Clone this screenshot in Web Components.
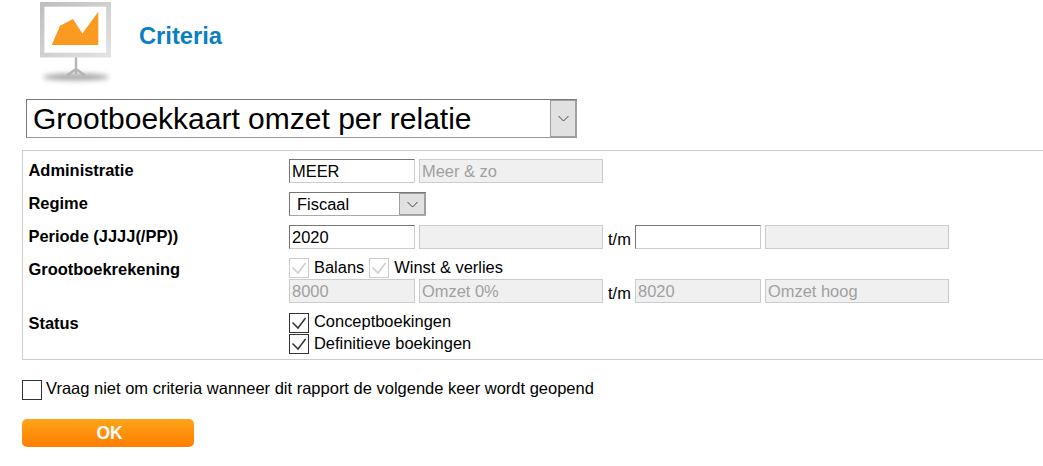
<!DOCTYPE html>
<html>
<head>
<meta charset="utf-8">
<title>Criteria</title>
<style>
  html, body { margin: 0; padding: 0; background: #fff; overflow: hidden; }
  body { font-family: "Liberation Sans", Arial, sans-serif; font-size: 16.45px; color: #000; }
  .line { display: flex; align-items: flex-start; gap: 4px; }
  .line.tight { gap: 5px; height: 21px; }
</style>
</head>
<body>
<criteria-page>
  <criteria-header>Criteria</criteria-header>
  <report-select>Grootboekkaart omzet per relatie</report-select>
  <criteria-panel>
    <span slot="l1">Administratie</span>
    <div slot="f1" class="line">
      <text-box>MEER</text-box><text-box wide disabled>Meer &amp; zo</text-box>
    </div>
    <span slot="l2">Regime</span>
    <div slot="f2" class="line"><small-select>Fiscaal</small-select></div>
    <span slot="l3">Periode (JJJJ(/PP))</span>
    <div slot="f3" class="line">
      <text-box>2020</text-box><text-box wide disabled></text-box><range-sep></range-sep><text-box></text-box><text-box wide disabled></text-box>
    </div>
    <span slot="l4">Grootboekrekening</span>
    <div slot="f4">
      <div class="line tight"><check-box checked disabled>Balans</check-box><check-box checked disabled>Winst &amp; verlies</check-box></div>
      <div class="line">
        <text-box disabled>8000</text-box><text-box wide disabled>Omzet 0%</text-box><range-sep></range-sep><text-box disabled>8020</text-box><text-box wide disabled>Omzet hoog</text-box>
      </div>
    </div>
    <span slot="l5">Status</span>
    <div slot="f5">
      <check-box checked block class="first">Conceptboekingen</check-box>
      <check-box checked block>Definitieve boekingen</check-box>
    </div>
  </criteria-panel>
  <check-box class="ask">Vraag niet om criteria wanneer dit rapport de volgende keer wordt geopend</check-box>
  <ok-button>OK</ok-button>
</criteria-page>

<script>
class CriteriaPage extends HTMLElement {
  constructor() {
    super();
    this.attachShadow({mode: "open"}).innerHTML = `
      <style>
        :host { display: block; width: 1043px; }
        .wrap { display: flex; flex-direction: column; align-items: flex-start; }
        ::slotted(check-box.ask) { margin: 20px 0 19px 22px; --box-gap: 4px; --txt-lh: 16px; font-size: 16.5px; }
      </style>
      <div class="wrap"><slot></slot></div>`;
  }
}

class CriteriaHeader extends HTMLElement {
  constructor() {
    super();
    this.attachShadow({mode: "open"}).innerHTML = `
      <style>
        :host { display: flex; align-items: center; height: 90px; margin-bottom: 9px; }
        svg { display: block; margin-left: 34px; width: 90px; height: 90px; flex: none; }
        h1 { margin: 0 0 18px 15px; font-size: 23.7px; font-weight: bold; color: #0a80c4; }
      </style>
      <svg viewBox="0 0 90 90">
        <defs>
          <filter id="blur" x="-30%" y="-100%" width="160%" height="300%"><feGaussianBlur stdDeviation="2.6"/></filter>
          <linearGradient id="frame" x1="0" y1="0" x2="1" y2="1">
            <stop offset="0" stop-color="#bdbdbd"/><stop offset="1" stop-color="#e4e4e4"/>
          </linearGradient>
        </defs>
        <ellipse cx="42" cy="77" rx="33" ry="3.6" fill="#a8a8a8" filter="url(#blur)"/>
        <rect x="6" y="2" width="71" height="55.5" fill="url(#frame)"/>
        <rect x="10.400" y="6.700" width="61.700" height="46" fill="#fff"/>
        <path d="M17.700 45 L26 25.700 L39 19 L48.400 33.500 L64.300 11.700 V45 Z" fill="#fb9a20"/>
        <path d="M42 57.500 V74 M42 69 L33 75.500 M42 69 L51 75.500" stroke="#b4b4b4" stroke-width="2.400" fill="none"/>
      </svg>
      <h1><slot></slot></h1>`;
  }
}

class ReportSelect extends HTMLElement {
  constructor() {
    super();
    this.attachShadow({mode: "open"}).innerHTML = `
      <style>
        :host { display: flex; box-sizing: border-box; width: 551px; height: 39px; margin: 0 0 12px 26px;
                border: 1px solid #7a7a7a; border-right: 0; border-bottom-color: #999; }
        .txt { flex: 1; padding-left: 6px; font-size: 30px; line-height: 37px; white-space: nowrap; }
        .btn { display: flex; align-items: center; justify-content: center; box-sizing: border-box; width: 27px;
               background: #e1e1e1; border: 2px solid #a0a0a0; border-width: 1px 2px 1px 1px; }
        svg { width: 11px; height: 7px; }
      </style>
      <div class="txt"><slot></slot></div>
      <div class="btn"><svg viewBox="0 0 11 7"><path d="M.5 1 L5.500 6 L10.500 1" fill="none" stroke="#444" stroke-width="1"/></svg></div>`;
  }
}

class SmallSelect extends HTMLElement {
  constructor() {
    super();
    this.attachShadow({mode: "open"}).innerHTML = `
      <style>
        :host { display: flex; box-sizing: border-box; width: 137px; height: 24px;
                border: 1px solid #767676; border-right: 0; border-bottom-color: #aaa; }
        .txt { flex: 1; padding-left: 7px; line-height: 22px; }
        .btn { display: flex; align-items: center; justify-content: center; box-sizing: border-box; width: 27px;
               background: #e1e1e1; border: 1px solid #a0a0a0; border-right-width: 2px; }
        svg { width: 11px; height: 7px; }
      </style>
      <div class="txt"><slot></slot></div>
      <div class="btn"><svg viewBox="0 0 11 7"><path d="M.5 1 L5.500 6 L10.500 1" fill="none" stroke="#444" stroke-width="1"/></svg></div>`;
  }
}

class CriteriaPanel extends HTMLElement {
  constructor() {
    super();
    let rows = "";
    for (let i = 1; i <= 5; i++) {
      rows += `<div class="lbl"><slot name="l${i}"></slot></div><div class="fld f${i}"><slot name="f${i}"></slot></div>`;
    }
    this.attachShadow({mode: "open"}).innerHTML = `
      <style>
        :host { display: block; box-sizing: border-box; margin-left: 22px; width: 1021px; height: 210px;
                border: 1px solid #ccc; border-right: 0; padding: 8px 0 5px 5.5px; }
        .grid { display: grid; grid-template-columns: 260.500px 1fr; row-gap: 9px; }
        .lbl { font-weight: bold; line-height: 22px; font-size: 16.45px; }
        .f5 { margin-top: 1px; }
      </style>
      <div class="grid">${rows}</div>`;
  }
}

class TextBox extends HTMLElement {
  constructor() {
    super();
    this.attachShadow({mode: "open"}).innerHTML = `
      <style>
        :host { display: block; box-sizing: border-box; flex: none; width: 126px; height: 24px; padding: 0 2px;
                background: #fff; border: 1px solid #ccc; border-top-color: #767676; border-left-color: #767676;
                line-height: 23px; white-space: nowrap; overflow: hidden; }
        :host([wide]) { width: 184px; }
        :host([disabled]) { background: #f0f0f0; border-color: #ccc; color: #a0a0a0; }
      </style>
      <slot></slot>`;
  }
}

class RangeSep extends HTMLElement {
  constructor() {
    super();
    this.attachShadow({mode: "open"}).innerHTML = `
      <style>
        :host { display: block; box-sizing: border-box; flex: none; width: 24px; padding: 5px 0 0 1px; line-height: 19px; height: 24px; }
      </style>t/m`;
  }
}

class CheckBox extends HTMLElement {
  constructor() {
    super();
    const on = this.hasAttribute("checked");
    this.attachShadow({mode: "open"}).innerHTML = `
      <style>
        :host { display: inline-flex; align-items: flex-start; line-height: var(--txt-lh, 18px); height: 20px; white-space: nowrap; }
        :host([block]) { display: flex; height: 21px; }
        :host(.first) { --txt-lh: 16px; }
        .box { box-sizing: border-box; flex: none; width: 20px; height: 20px; margin-right: var(--box-gap, 5px);
               border: 1px solid #333; background: #fff; }
        :host([disabled]) .box { border-color: #ccc; }
        :host([disabled]) path { stroke: #ccc; }
        svg { display: block; width: 18px; height: 18px; }
        path { stroke: #333; stroke-width: 1.5; fill: none; }
      </style>
      <div class="box">${on ? '<svg viewBox="0 0 18 18"><path d="M2.500 8.500 L8 14 L15.500 4"/></svg>' : ""}</div>
      <span><slot></slot></span>`;
  }
}

class OkButton extends HTMLElement {
  constructor() {
    super();
    this.attachShadow({mode: "open"}).innerHTML = `
      <style>
        :host { display: flex; align-items: center; justify-content: center; box-sizing: border-box; width: 172px; height: 28px; margin-left: 22px;
                padding-left: 3px; border-radius: 5px; background: linear-gradient(#ffa518, #ff7d00); color: #fff;
                font-weight: bold; font-size: 17.5px; }
      </style>
      <slot></slot>`;
  }
}

customElements.define("criteria-page", CriteriaPage);
customElements.define("criteria-header", CriteriaHeader);
customElements.define("report-select", ReportSelect);
customElements.define("small-select", SmallSelect);
customElements.define("criteria-panel", CriteriaPanel);
customElements.define("text-box", TextBox);
customElements.define("range-sep", RangeSep);
customElements.define("check-box", CheckBox);
customElements.define("ok-button", OkButton);
</script>
</body>
</html>
